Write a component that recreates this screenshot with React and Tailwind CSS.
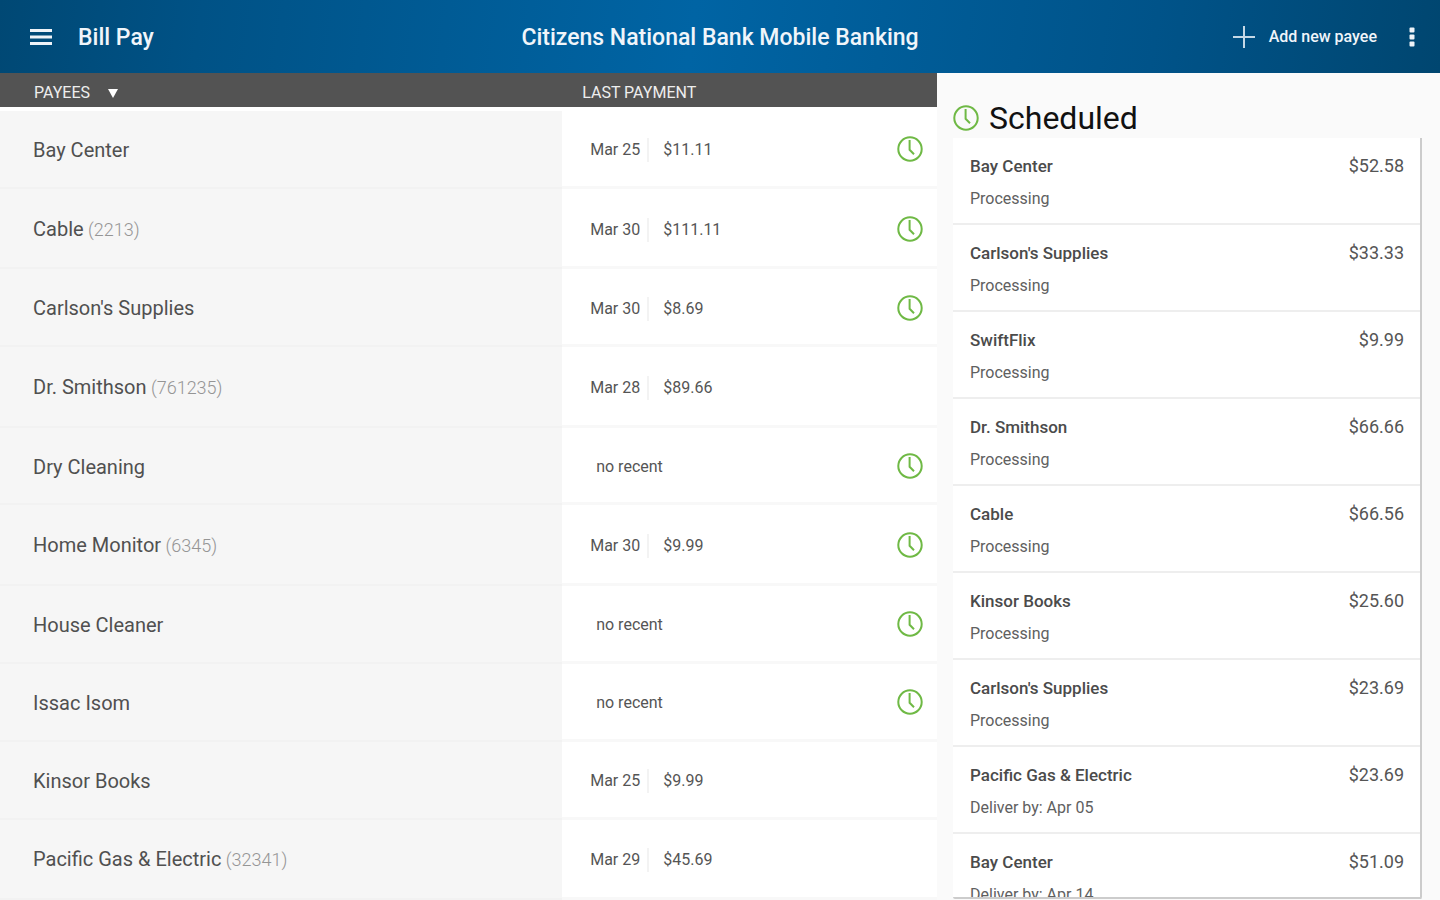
const payees = [
  { name: "Bay Center", date: "Mar 25", amount: "$11.11", scheduled: true },
  { name: "Cable", account: "(2213)", date: "Mar 30", amount: "$111.11", scheduled: true },
  { name: "Carlson's Supplies", date: "Mar 30", amount: "$8.69", scheduled: true },
  { name: "Dr. Smithson", account: "(761235)", date: "Mar 28", amount: "$89.66", scheduled: false },
  { name: "Dry Cleaning", scheduled: true },
  { name: "Home Monitor", account: "(6345)", date: "Mar 30", amount: "$9.99", scheduled: true },
  { name: "House Cleaner", scheduled: true },
  { name: "Issac Isom", scheduled: true },
  { name: "Kinsor Books", date: "Mar 25", amount: "$9.99", scheduled: false },
  { name: "Pacific Gas & Electric", account: "(32341)", date: "Mar 29", amount: "$45.69", scheduled: false },
];

const scheduled = [
  { name: "Bay Center", amount: "$52.58", status: "Processing" },
  { name: "Carlson's Supplies", amount: "$33.33", status: "Processing" },
  { name: "SwiftFlix", amount: "$9.99", status: "Processing" },
  { name: "Dr. Smithson", amount: "$66.66", status: "Processing" },
  { name: "Cable", amount: "$66.56", status: "Processing" },
  { name: "Kinsor Books", amount: "$25.60", status: "Processing" },
  { name: "Carlson's Supplies", amount: "$23.69", status: "Processing" },
  { name: "Pacific Gas & Electric", amount: "$23.69", status: "Deliver by: Apr 05" },
  { name: "Bay Center", amount: "$51.09", status: "Deliver by: Apr 14" },
];

function ClockIcon() {
  return (
    <svg viewBox="0 0 26 26" className="size-[26px] shrink-0" fill="none" stroke="#6fb945" strokeWidth="2" aria-hidden="true">
      <circle cx="13" cy="13" r="11.7" />
      <path d="M12.6 4v9.800l4.400 4.400" />
    </svg>
  );
}

function Header() {
  return (
    <header className="grid h-[73px] shrink-0 grid-cols-[1fr_auto_1fr] items-center bg-[linear-gradient(98deg,#004874_0%,#005286_14%,#0064a4_48%,#005389_80%,#004670_100%)] text-[#f0f5fa]">
      <div className="flex items-center gap-[26px] pl-[30px]">
        <button type="button" aria-label="Menu">
          <svg viewBox="0 0 22 18" className="h-[18px] w-[22px]" fill="#eef3f8" aria-hidden="true">
            <path d="M0 1h22v3H0zM0 7.500h22v3H0zM0 14h22v3H0z" />
          </svg>
        </button>
        <h1 className="pt-[2px] text-[23px] leading-8 font-medium">Bill Pay</h1>
      </div>
      <p className="pt-[2px] text-[23px] leading-8 font-medium">Citizens National Bank Mobile Banking</p>
      <div className="flex items-center justify-end gap-8 pr-[25px]">
        <button type="button" className="flex items-center gap-[14px] text-[16px] leading-6 font-medium">
          <svg viewBox="0 0 22 22" className="size-[22px]" stroke="#c5d8e6" strokeWidth="2" aria-hidden="true">
            <path d="M11 0v22M0 11h22" />
          </svg>
          Add new payee
        </button>
        <button type="button" aria-label="More options">
          <svg viewBox="0 0 6 20" className="h-5 w-[6px]" fill="#eef3f8" aria-hidden="true">
            <rect x="0.500" y="0.500" width="5" height="5" rx="1" />
            <rect x="0.500" y="7.500" width="5" height="5" rx="1" />
            <rect x="0.500" y="14.500" width="5" height="5" rx="1" />
          </svg>
        </button>
      </div>
    </header>
  );
}

function PayeeTable() {
  return (
    <table className="h-full w-full table-fixed border-separate border-spacing-0 text-left">
      <thead>
        <tr className="h-[38px] text-[16px] leading-6 text-[#eeeeee]">
          <th scope="col" className="w-[60%] border-b-4 border-white bg-[#535353] bg-clip-padding py-0 pl-[34px] font-normal">
            <button type="button" className="flex items-center gap-[18px] pt-[6px]">
              PAYEES
              <svg viewBox="0 0 10 9" className="h-[9px] w-[10px]" fill="#fff" aria-hidden="true">
                <path d="M0 0h10L5 9z" />
              </svg>
            </button>
          </th>
          <th scope="col" className="border-b-4 border-white bg-[#535353] bg-clip-padding px-5 pt-[6px] pb-0 font-normal">
            LAST PAYMENT
          </th>
        </tr>
      </thead>
      <tbody>
        {payees.map((p) => (
          <tr key={p.name}>
            <th scope="row" className="border-b-2 border-[#f2f2f2] bg-[#f6f6f6] pt-[2px] pb-0 pl-[33px] text-[20px] leading-7 font-normal text-[#505050]">
              {p.name}
              {p.account && <span className="text-[18px] font-light text-[#959595]"> {p.account}</span>}
            </th>
            <td className="border-b-3 border-[#f8f8f8] bg-white pt-[2px] pr-[14px] pb-0 pl-7 text-[16px] leading-6 text-[#555555]">
              <div className="flex items-center justify-between">
                {p.date ? (
                  <div className="flex items-center pt-[2px]">
                    <span className="w-[57px]">{p.date}</span>
                    <span className="border-l-2 border-[#f3f3f3] pl-[14px]">{p.amount}</span>
                  </div>
                ) : (
                  <span className="pt-[2px] pl-[6px]">no recent</span>
                )}
                {p.scheduled && <ClockIcon />}
              </div>
            </td>
          </tr>
        ))}
      </tbody>
    </table>
  );
}

function ScheduledPanel() {
  return (
    <aside className="flex min-h-0 flex-col bg-[#fafafa] pt-6 pr-[18px] pb-px pl-4">
      <h2 className="flex h-[41px] shrink-0 items-center gap-[10px] text-[32px] leading-10 text-[#111111]">
        <ClockIcon />
        Scheduled
      </h2>
      <ul className="min-h-0 flex-1 overflow-hidden rounded-b-xs border-r-2 border-b-2 border-[#cccccc] bg-white">
        {scheduled.map((s, i) => (
          <li key={i} className="h-[87px] border-b-2 border-[#eeeeee] px-[17px] pt-4 pr-4 text-[16px] leading-6">
            <div className="flex justify-between">
              <span className="text-[17px] font-medium text-[#4b4b4b]">{s.name}</span>
              <span className="text-[18px] text-[#555555]">{s.amount}</span>
            </div>
            <div className="pt-[9px] text-[#606060]">{s.status}</div>
          </li>
        ))}
      </ul>
    </aside>
  );
}

export default function App() {
  return (
    <div className="flex h-screen flex-col bg-[#fafafa] font-[Roboto,sans-serif]">
      <Header />
      <main className="grid min-h-0 flex-1 grid-cols-[937fr_503fr]">
        <div className="min-h-0 overflow-hidden">
          <PayeeTable />
        </div>
        <ScheduledPanel />
      </main>
    </div>
  );
}
